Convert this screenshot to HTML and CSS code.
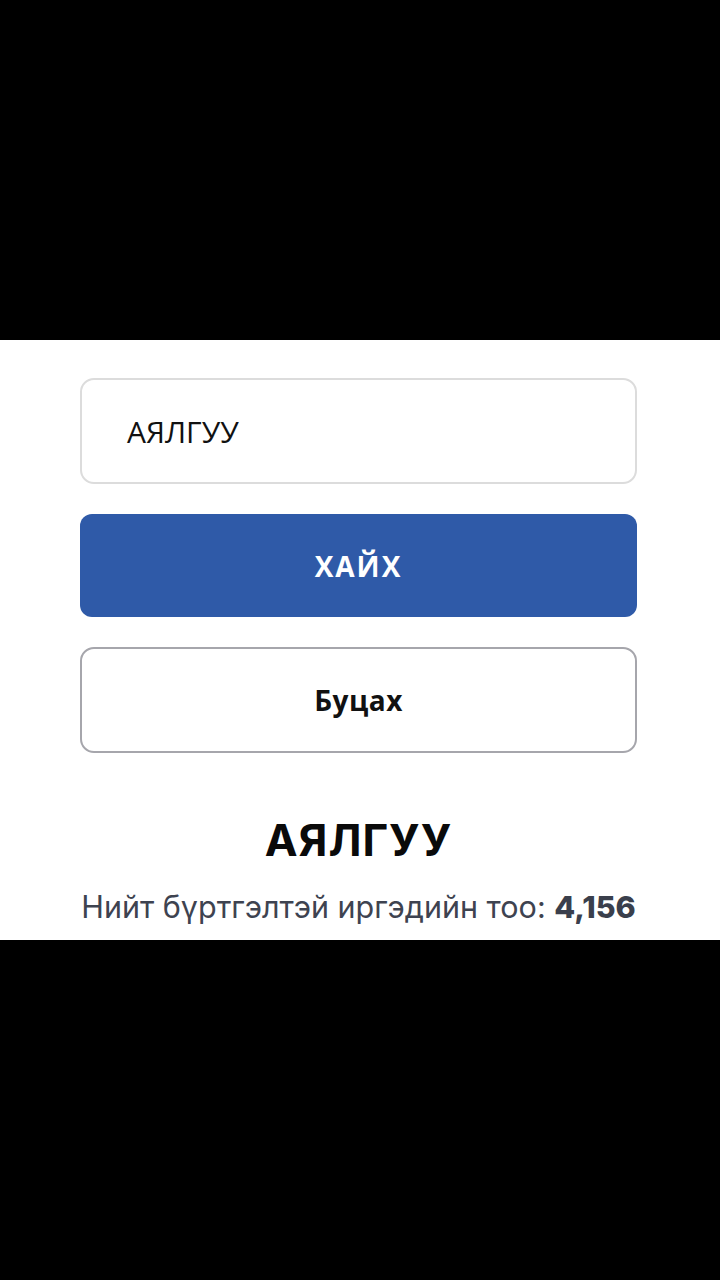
FILE: index.html
```html
<!DOCTYPE html>
<html lang="mn">
<head>
<meta charset="utf-8">
<link rel="stylesheet" href="styles.css">
</head>
<body>
<div class="screen">
  <div class="band"></div>
  <main class="panel">
    <div class="field"><span class="field-text">АЯЛГУУ</span></div>
    <button class="btn btn-primary">ХАЙХ</button>
    <button class="btn btn-outline">Буцах</button>
    <h1 class="title">АЯЛГУУ</h1>
    <p class="count">Нийт бүртгэлтэй иргэдийн тоо: <b class="num">4,156</b></p>
  </main>
  <div class="band band-bottom"></div>
</div>
</body>
</html>
```
FILE: styles.css
```css
html, body {
  margin: 0;
  padding: 0;
  background: #000;
}
.screen {
  width: 720px;
  height: 1280px;
  display: flex;
  flex-direction: column;
  background: #000;
}
.band {
  height: 340px;
  flex: none;
}
.band-bottom {
  flex: 1;
}
.panel {
  height: 600px;
  background: #fff;
  box-sizing: border-box;
  padding: 38px 83px 0 80px;
  display: flex;
  flex-direction: column;
}
.field {
  height: 106px;
  box-sizing: border-box;
  border: 2px solid #dcdcdc;
  border-radius: 14px;
  display: flex;
  align-items: center;
  padding-left: 45px;
}
.field-text {
  font-family: "Open Sans", "Noto Sans", sans-serif;
  font-size: 30px;
  color: #111;
}
.btn {
  display: flex;
  align-items: center;
  justify-content: center;
  box-sizing: border-box;
  width: 100%;
  margin: 30px 0 0;
  font-family: "Open Sans", "Noto Sans", sans-serif;
  font-weight: 700;
  cursor: pointer;
}
.btn-primary {
  height: 103px;
  background: #2f5aa8;
  border: none;
  border-radius: 12px;
  color: #fff;
  font-size: 28px;
  letter-spacing: 2px;
}
.btn-outline {
  height: 106px;
  background: #fff;
  border: 2px solid #a6a6ac;
  border-radius: 14px;
  color: #111;
  font-size: 28px;
  letter-spacing: 0.5px;
}
.title {
  margin: 60px 0 0;
  text-align: center;
  font-family: Inter, Roboto, sans-serif;
  font-weight: 700;
  font-size: 44px;
  line-height: 54px;
  letter-spacing: 1px;
  color: #0a0a0a;
}
.count {
  margin: 22px 0 0;
  text-align: center;
  font-family: Inter, Roboto, sans-serif;
  font-size: 30.5px;
  line-height: 36px;
  color: #3e4350;
  white-space: nowrap;
}
.num {
  font-weight: 800;
  color: #3a3f4c;
}
```
